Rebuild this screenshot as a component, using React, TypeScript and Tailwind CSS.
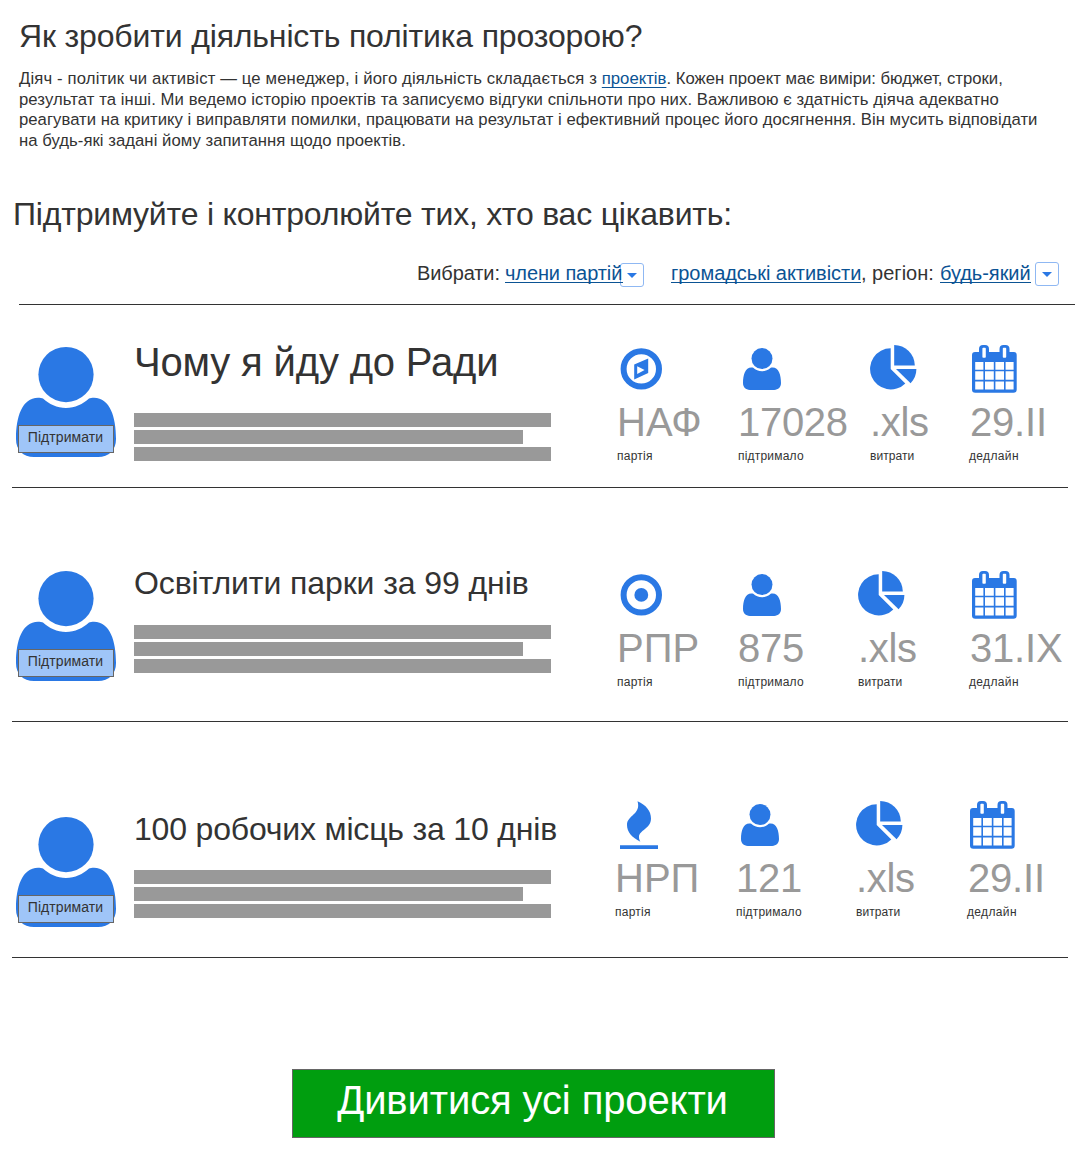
import React from 'react';

const BLUE = '#2a78e4';

function Person({ className }: { className: string }) {
  return (
    <svg viewBox="0 0 100 110" className={className} fill={BLUE}>
      <circle cx="50" cy="27.6" r="27.6" />
      <path d="M27 51.5C33 57 41 61 50 61S67 57 73 51.5C74 51 76 50.8 78 50.8C94 51 100 70 100 92C100 103 93 110 82 110H18C7 110 0 103 0 92C0 70 6 51 22 50.8C24 50.8 26 51 27 51.5Z" />
    </svg>
  );
}

function Compass() {
  return (
    <svg viewBox="0 0 48 50" className="ml-[3px] h-[50px] w-[48px]" fill={BLUE}>
      <circle cx="21.3" cy="24.9" r="17.7" fill="none" stroke={BLUE} strokeWidth="6" />
      <path fillRule="evenodd" d="M14.2 20.6L28.2 14.4V28.9L14.2 35.5ZM17.2 22.2V29.9L24.6 25.9Z" />
    </svg>
  );
}

function Target() {
  return (
    <svg viewBox="0 0 48 50" className="ml-[3px] h-[50px] w-[48px]" fill={BLUE}>
      <circle cx="21.3" cy="24.9" r="17.7" fill="none" stroke={BLUE} strokeWidth="6" />
      <circle cx="21.3" cy="24.9" r="6.9" />
    </svg>
  );
}

function Flame() {
  return (
    <svg viewBox="0 0 48 50" className="ml-[5px] h-[50px] w-[48px]" fill={BLUE}>
      <path d="M17.5 1.3C26 5 31 11 31 18.5C31 29 19 30 19 37C19 39 19.6 40.4 20.4 41.7C12 37.5 7 32 7 25C7 15 21.5 14.5 17.5 1.3Z" />
      <path d="M0 45.2H38V49H0Z" />
    </svg>
  );
}

function Pie() {
  return (
    <svg viewBox="0 0 48 50" className="h-[50px] w-[48px]" fill={BLUE}>
      <path d="M20.7 4.3V25L35.3 39.4A20.6 20.6 0 1 1 20.7 4.3Z" />
      <path d="M24.2 1A20.6 20.6 0 0 1 44.8 21.4H24.2Z" />
      <path d="M26 25H46.4A20.6 20.6 0 0 1 40.6 39.2Z" />
    </svg>
  );
}

function Calendar() {
  return (
    <svg viewBox="0 0 48 50" className="ml-[3px] h-[50px] w-[48px]" fill={BLUE}>
      <path
        fillRule="evenodd"
        d="M3 8H7V5A4 4 0 0 1 11 1H13A4 4 0 0 1 17 5V8H27.5V5A4 4 0 0 1 31.5 1H33.5A4 4 0 0 1 37.5 5V8H41.5A3 3 0 0 1 44.7 11V45.5A3.3 3.3 0 0 1 41.4 48.8H3.3A3.3 3.3 0 0 1 0 45.5V11A3 3 0 0 1 3 8ZM3.2 18V25.7H11.4V18ZM13 18V25.7H21.8V18ZM23.4 18V25.7H32V18ZM33.6 18V25.7H41.6V18ZM3.2 27.3V35.8H11.4V27.3ZM13 27.3V35.8H21.8V27.3ZM23.4 27.3V35.8H32V27.3ZM33.6 27.3V35.8H41.6V27.3ZM3.2 37.5V45.6H11.4V37.5ZM13 37.5V45.6H21.8V37.5ZM23.4 37.5V45.6H32V37.5ZM33.6 37.5V45.6H41.6V37.5ZM11.2 3.8Q10.4 3.8 10.4 4.6V13Q10.4 13.8 11.2 13.8H13Q13.8 13.8 13.8 13V4.6Q13.8 3.8 13 3.8ZM31.6 3.8Q30.8 3.8 30.8 4.6V13Q30.8 13.8 31.6 13.8H33.4Q34.2 13.8 34.2 13V4.6Q34.2 3.8 33.4 3.8Z"
      />
    </svg>
  );
}

function Dropdown({ className }: { className: string }) {
  return (
    <button className={`flex h-6 w-6 shrink-0 items-center justify-center rounded-[3px] border-[1.5px] border-[#8fb8f3] bg-white ${className}`}>
      <svg viewBox="0 0 10 5" className="h-[5px] w-[10px]" fill={BLUE}>
        <path d="M0 0H10L5 5Z" />
      </svg>
    </button>
  );
}

type StatProps = { icon: React.ReactNode; value: string; label: string; valueClass?: string; labelClass: string };

function Stat({ icon, value, label, valueClass = '', labelClass }: StatProps) {
  return (
    <div className="whitespace-nowrap">
      <div className="h-[50px]">{icon}</div>
      <div className={`mt-1.5 h-[44px] text-[40px] leading-[44px] text-[#999999] ${valueClass}`}>{value}</div>
      <div className={`mt-1 h-4 text-[12px] leading-4 ${labelClass}`}>{label}</div>
    </div>
  );
}

type RowProps = {
  section: string;
  avatar: string;
  title: string;
  titleClass: string;
  bars: string;
  stats: string;
  party: React.ReactNode;
  partyName: string;
  supporters: string;
  deadline: string;
};

function ProjectRow(p: RowProps) {
  return (
    <section className={`ml-3 flex w-[1056px] items-start border-b border-[#333333] ${p.section}`}>
      <div className={`relative ml-1 w-[100px] shrink-0 ${p.avatar}`}>
        <Person className="h-[110px] w-[100px]" />
        <button className="absolute top-[78px] left-[2px] h-[28px] w-[96px] border border-[#666666] bg-[#9fc5f8] pr-px pb-[4px] text-[14px] leading-[22px] tracking-[0.08px] whitespace-nowrap">
          Підтримати
        </button>
      </div>
      <div className="ml-[18px] w-[483px] shrink-0">
        <h3 className={`whitespace-nowrap ${p.titleClass}`}>{p.title}</h3>
        <div className={`flex flex-col gap-[3px] ${p.bars}`}>
          <div className="h-[14px] w-[417px] bg-[#999999]" />
          <div className="h-[14px] w-[389px] bg-[#999999]" />
          <div className="h-[14px] w-[417px] bg-[#999999]" />
        </div>
      </div>
      <div className={`grid shrink-0 ${p.stats}`}>
        <Stat icon={p.party} value={p.partyName} label="партія" labelClass="tracking-[0.25px]" />
        <Stat
          icon={<Person className="ml-[5px] h-[50px] w-[38px] pt-1 pb-1" />}
          value={p.supporters}
          label="підтримало"
          valueClass="tracking-[-0.3px]"
          labelClass="tracking-[0.2px]"
        />
        <Stat icon={<Pie />} value=".xls" label="витрати" valueClass="tracking-[-0.3px]" labelClass="tracking-[0.05px]" />
        <Stat icon={<Calendar />} value={p.deadline} label="дедлайн" valueClass="pl-px tracking-[-0.2px]" labelClass="tracking-[0.35px]" />
      </div>
    </section>
  );
}

export default function App() {
  return (
    <main className="h-[1158px] w-[1092px] overflow-hidden bg-white font-['Liberation_Sans',Arial,sans-serif] text-[#333333]">
      <header className="pt-4 pl-[19px]">
        <h1 className="h-10 text-[32px] leading-10 tracking-[-0.155px] whitespace-nowrap">Як зробити діяльність політика прозорою?</h1>
        <p className="mt-[13px] text-[16.7px] leading-[20.6px] whitespace-nowrap">
          <span className="tracking-[0.14px]">Діяч - політик чи активіст — це менеджер, і його діяльність складається з </span>
          <a className="text-[#0b5394] underline decoration-1 underline-offset-[3px] [text-decoration-skip-ink:none]">проектів</a>
          <span>. Кожен проект має виміри: бюджет, строки,</span>
          <br />
          <span className="tracking-[0.08px]">
            результат та інші. Ми ведемо історію проектів та записуємо відгуки спільноти про них. Важливою є здатність діяча адекватно
          </span>
          <br />
          <span className="tracking-[0.03px]">
            реагувати на критику і виправляти помилки, працювати на результат і ефективний процес його досягнення. Він мусить відповідати
          </span>
          <br />
          <span className="tracking-[0.04px]">на будь-які задані йому запитання щодо проектів.</span>
        </p>
      </header>
      <h2 className="mt-[43px] ml-[13px] h-10 text-[32px] leading-10 tracking-[-0.2px] whitespace-nowrap">
        Підтримуйте і контролюйте тих, хто вас цікавить:
      </h2>
      <div className="ml-[19px] flex h-[71px] w-[1056px] items-start border-b border-[#333333] pt-[27px] text-[20px] leading-[24px] whitespace-nowrap">
        <span className="ml-[398px] w-[88px] tracking-[-0.1px]">Вибрати:</span>
        <a className="z-10 h-[22px] w-[118px] border-b border-[#0b5394] tracking-[-0.1px] text-[#0b5394]">члени партій</a>
        <Dropdown className="-ml-[3px] mt-[2px]" />
        <a className="ml-[27px] h-[22px] w-[190px] border-b border-[#0b5394] tracking-[-0.04px] text-[#0b5394]">громадські активісти</a>
        <span className="w-[79px]">, регіон:</span>
        <a className="h-[22px] w-[91px] border-b border-[#0b5394] tracking-[-0.05px] text-[#0b5394]">будь-який</a>
        <Dropdown className="ml-1 mt-[1px]" />
      </div>
      <ProjectRow
        section="h-[183px]"
        avatar="mt-[42px]"
        title="Чому я йду до Ради"
        titleClass="mt-[33px] h-[48px] text-[40px] leading-[48px] tracking-[-0.17px]"
        bars="mt-[27px]"
        stats="mt-[39px] grid-cols-[121px_132px_99px_87px]"
        party={<Compass />}
        partyName="НАФ"
        supporters="17028"
        deadline="29.II"
      />
      <ProjectRow
        section="h-[234px]"
        avatar="mt-[83px]"
        title="Освітлити парки за 99 днів"
        titleClass="mt-[75px] h-10 text-[32px] leading-10 tracking-[-0.09px]"
        bars="mt-[22px]"
        stats="mt-[82px] grid-cols-[121px_120px_111px_87px]"
        party={<Target />}
        partyName="РПР"
        supporters="875"
        deadline="31.IX"
      />
      <ProjectRow
        section="h-[236px]"
        avatar="mt-[95px]"
        title="100 робочих місць за 10 днів"
        titleClass="mt-[87px] h-10 text-[32px] leading-10 tracking-[-0.18px]"
        bars="mt-[21px]"
        stats="-ml-[2px] mt-[78px] grid-cols-[121px_120px_111px_87px]"
        party={<Flame />}
        partyName="НРП"
        supporters="121"
        deadline="29.II"
      />
      <button className="mt-[111px] ml-[292px] block h-[69px] w-[483px] border border-[#666666] bg-[#009e0f] pr-[2px] pb-[7px] text-[40px] leading-[60px] tracking-[-0.12px] whitespace-nowrap text-white">
        Дивитися усі проекти
      </button>
    </main>
  );
}
